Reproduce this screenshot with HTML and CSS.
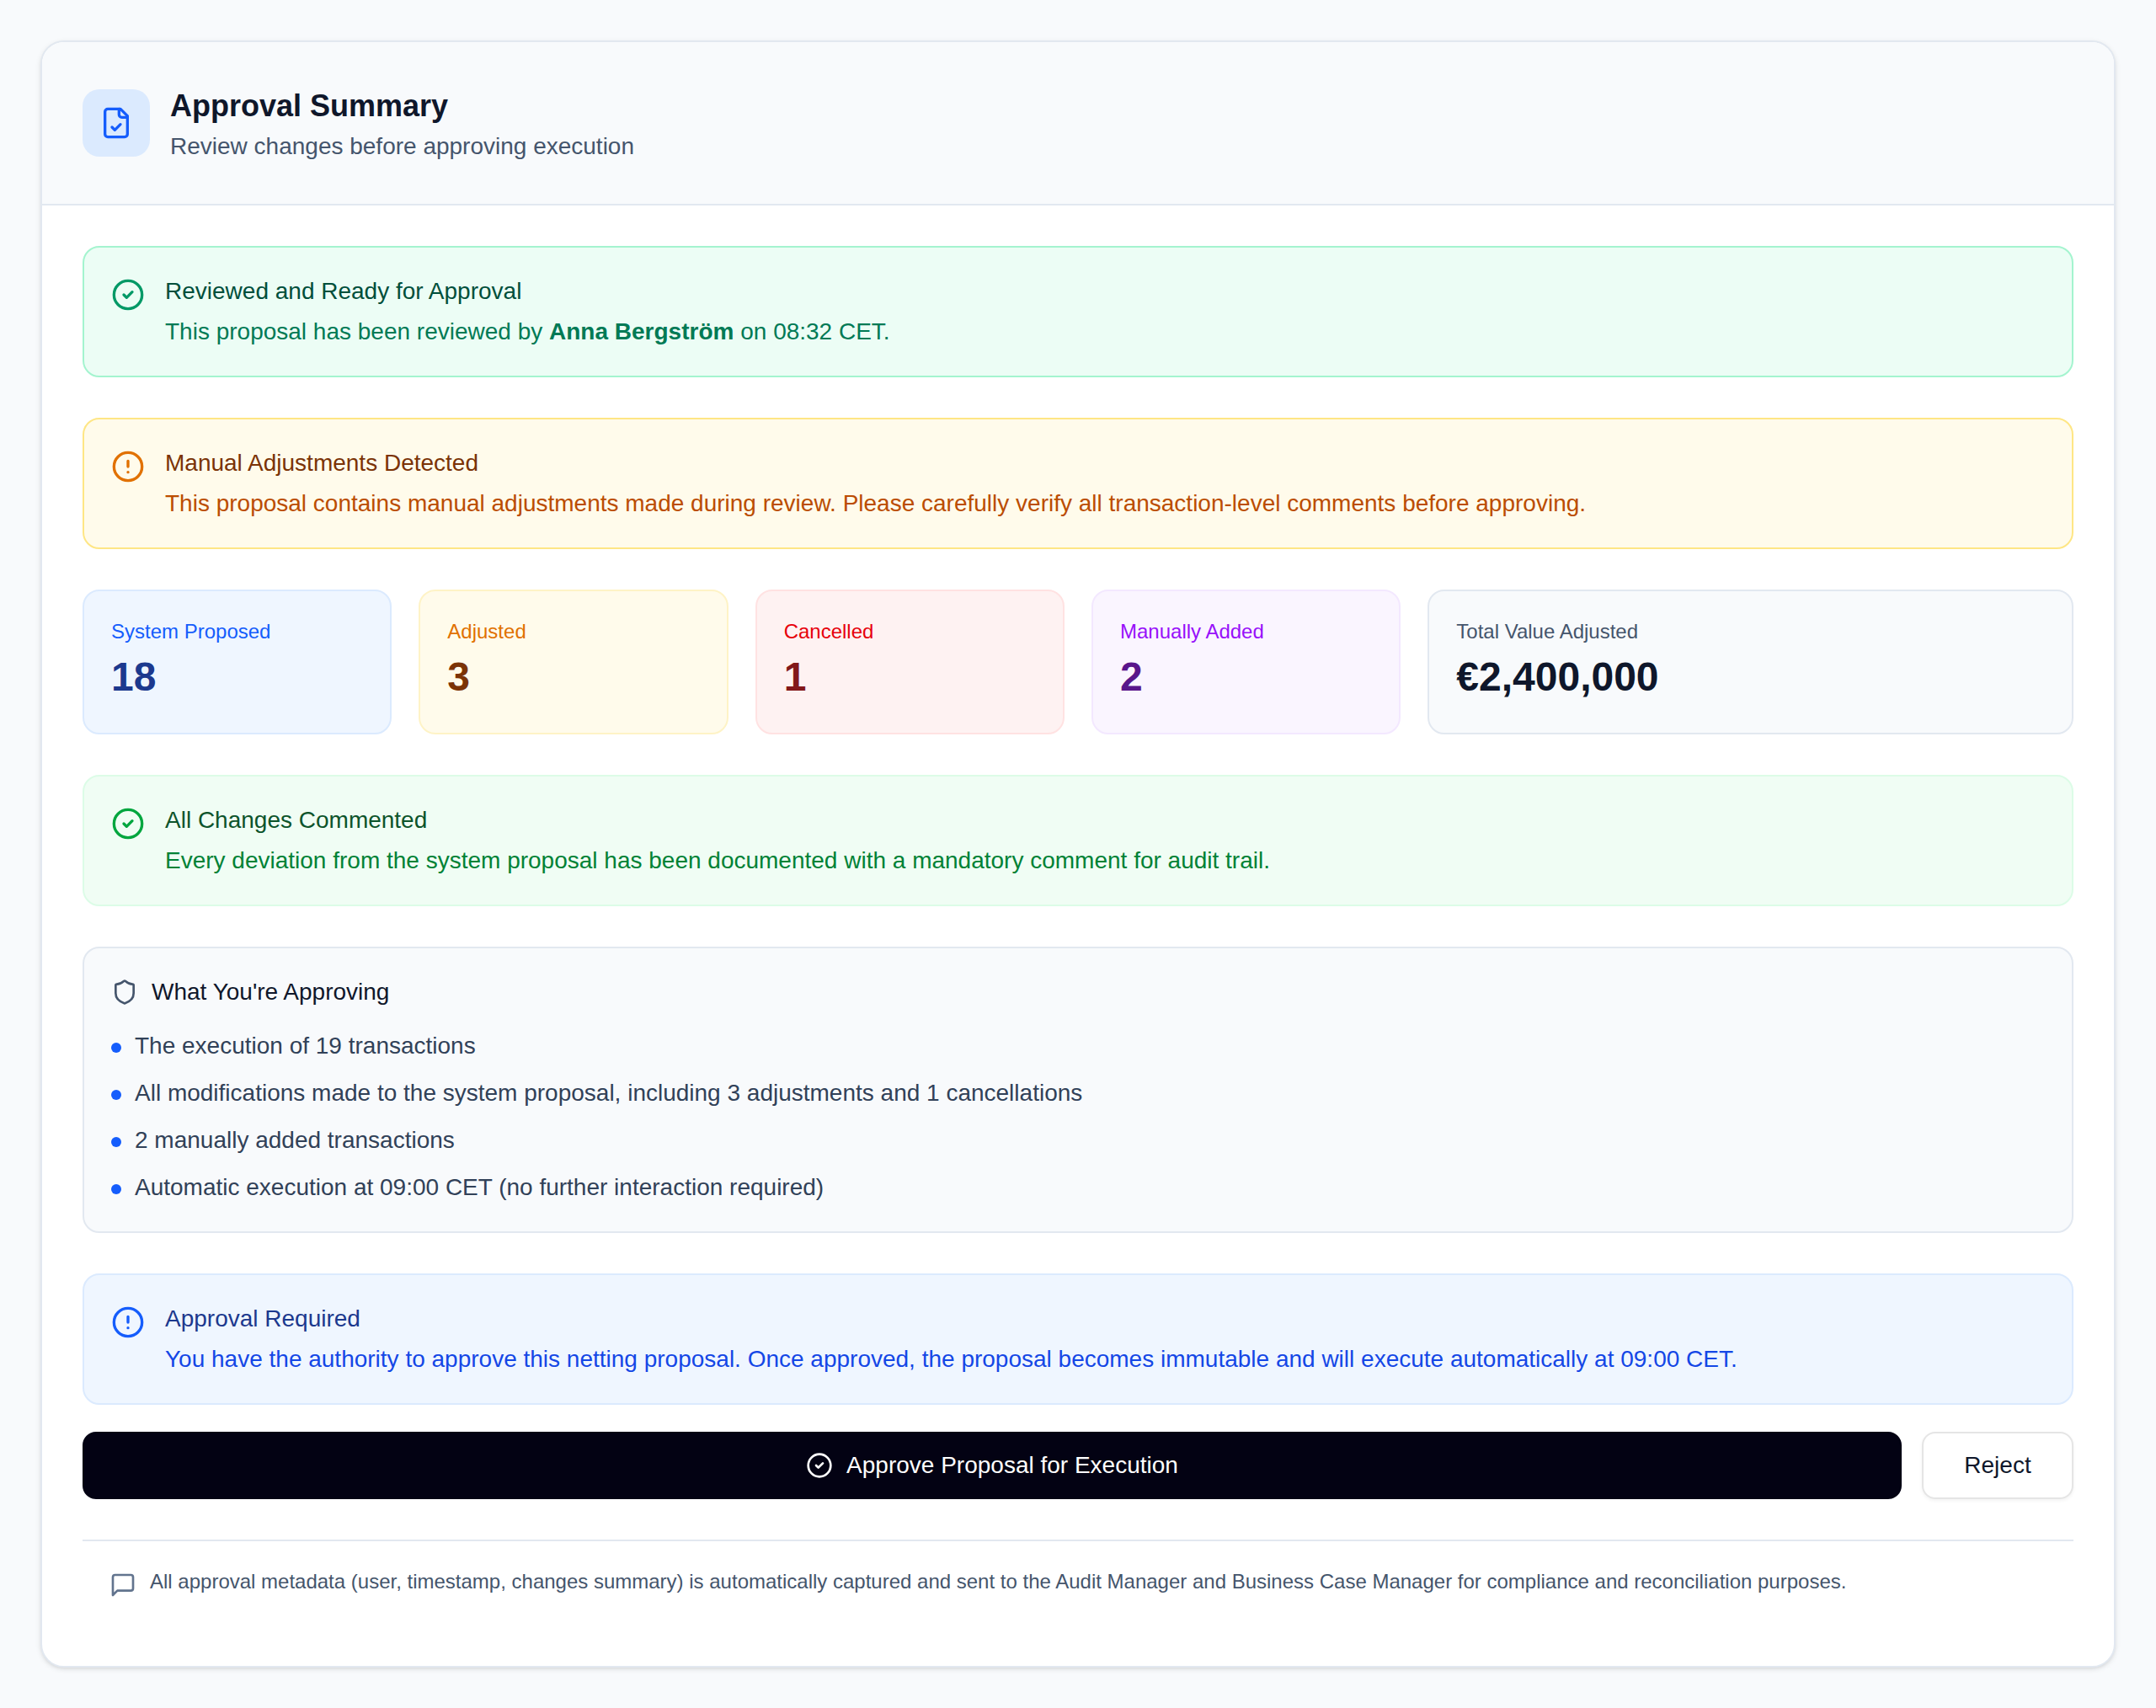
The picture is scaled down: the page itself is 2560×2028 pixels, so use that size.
FILE: index.html
```html
<!DOCTYPE html>
<html lang="en">
<head>
  <meta charset="UTF-8" />
  <meta name="viewport" content="width=device-width, initial-scale=1.0" />
  <title>Approval Summary</title>
  <link rel="stylesheet" href="styles.css">
</head>
<body>
  <!-- shared icons -->
  <svg class="sprite" aria-hidden="true">
    <symbol id="icon-check" viewBox="0 0 24 24">
      <circle cx="12" cy="12" r="10" />
      <path d="m9 12 2 2 4-4" />
    </symbol>
    <symbol id="icon-alert" viewBox="0 0 24 24">
      <circle cx="12" cy="12" r="10" />
      <path d="M12 8v4M12 16h.01" />
    </symbol>
  </svg>

  <main class="card">
    <header class="card-header">
      <div class="header-icon">
        <svg class="icon icon-lg" viewBox="0 0 24 24">
          <path d="M15 2H6a2 2 0 0 0-2 2v16a2 2 0 0 0 2 2h12a2 2 0 0 0 2-2V7Z" />
          <path d="M14 2v4a2 2 0 0 0 2 2h4" />
          <path d="m9 15 2 2 4-4" />
        </svg>
      </div>
      <div>
        <h1>Approval Summary</h1>
        <p class="subtitle">Review changes before approving execution</p>
      </div>
    </header>

    <div class="card-body">
      <section class="alert alert-reviewed">
        <svg class="icon icon-lg"><use href="#icon-check" /></svg>
        <div>
          <h2>Reviewed and Ready for Approval</h2>
          <p>This proposal has been reviewed by <strong>Anna Bergström</strong> on 08:32 CET.</p>
        </div>
      </section>

      <section class="alert alert-warning">
        <svg class="icon icon-lg"><use href="#icon-alert" /></svg>
        <div>
          <h2>Manual Adjustments Detected</h2>
          <p>This proposal contains manual adjustments made during review. Please carefully verify all transaction-level comments before approving.</p>
        </div>
      </section>

      <section class="stats">
        <div class="stat stat-blue">
          <p class="stat-label">System Proposed</p>
          <p class="stat-value">18</p>
        </div>
        <div class="stat stat-amber">
          <p class="stat-label">Adjusted</p>
          <p class="stat-value">3</p>
        </div>
        <div class="stat stat-red">
          <p class="stat-label">Cancelled</p>
          <p class="stat-value">1</p>
        </div>
        <div class="stat stat-purple">
          <p class="stat-label">Manually Added</p>
          <p class="stat-value">2</p>
        </div>
        <div class="stat stat-total">
          <p class="stat-label">Total Value Adjusted</p>
          <p class="stat-value">€2,400,000</p>
        </div>
      </section>

      <section class="alert alert-success">
        <svg class="icon icon-lg"><use href="#icon-check" /></svg>
        <div>
          <h2>All Changes Commented</h2>
          <p>Every deviation from the system proposal has been documented with a mandatory comment for audit trail.</p>
        </div>
      </section>

      <section class="approving">
        <h2>
          <svg class="icon" viewBox="0 0 24 24">
            <path d="M20 13c0 5-3.5 7.5-7.66 8.95a1 1 0 0 1-.67-.01C7.5 20.5 4 18 4 13V6a1 1 0 0 1 1-1c2 0 4.5-1.2 6.24-2.72a1.17 1.17 0 0 1 1.52 0C14.51 3.81 17 5 19 5a1 1 0 0 1 1 1z" />
          </svg>
          What You're Approving
        </h2>
        <ul>
          <li>The execution of 19 transactions</li>
          <li>All modifications made to the system proposal, including 3 adjustments and 1 cancellations</li>
          <li>2 manually added transactions</li>
          <li>Automatic execution at 09:00 CET (no further interaction required)</li>
        </ul>
      </section>

      <div class="decision">
        <section class="alert alert-info">
          <svg class="icon icon-lg"><use href="#icon-alert" /></svg>
          <div>
            <h2>Approval Required</h2>
            <p>You have the authority to approve this netting proposal. Once approved, the proposal becomes immutable and will execute automatically at 09:00 CET.</p>
          </div>
        </section>

        <div class="actions">
          <button type="button" class="btn btn-primary">
            <svg class="icon"><use href="#icon-check" /></svg>
            Approve Proposal for Execution
          </button>
          <button type="button" class="btn btn-outline">Reject</button>
        </div>
      </div>

      <footer class="audit-note">
        <svg class="icon" viewBox="0 0 24 24">
          <path d="M21 15a2 2 0 0 1-2 2H7l-4 4V5a2 2 0 0 1 2-2h14a2 2 0 0 1 2 2z" />
        </svg>
        <p>All approval metadata (user, timestamp, changes summary) is automatically captured and sent to the Audit Manager and Business Case Manager for compliance and reconciliation purposes.</p>
      </footer>
    </div>
  </main>
</body>
</html>
```
FILE: styles.css
```css
* {
  margin: 0;
  padding: 0;
  box-sizing: border-box;
}

body {
  padding: 48px;
  background: #f8fafc;
  color: #0f172b;
  font-family: "Liberation Sans", Arial, sans-serif;
  font-size: 28px;
  line-height: 40px;
}

h2 {
  font-size: 28px;
  font-weight: 400;
}

.sprite {
  display: none;
}

.icon {
  width: 32px;
  height: 32px;
  flex-shrink: 0;
  fill: none;
  stroke: currentColor;
  stroke-width: 2;
  stroke-linecap: round;
  stroke-linejoin: round;
}

.icon-lg {
  width: 40px;
  height: 40px;
}

/* Card */
.card {
  background: #fff;
  border: 2px solid #e2e8f0;
  border-radius: 28px;
  overflow: hidden;
  box-shadow: 0 2px 6px rgba(0, 0, 0, 0.1), 0 2px 4px -2px rgba(0, 0, 0, 0.1);
}

.card-header {
  display: flex;
  align-items: center;
  gap: 24px;
  padding: 48px;
  background: #f8fafc;
  border-bottom: 2px solid #e2e8f0;
}

.header-icon {
  display: flex;
  padding: 20px;
  border-radius: 20px;
  background: #dbeafe;
  color: #155dfc;
}

.card-header h1 {
  font-size: 36px;
  line-height: 56px;
}

.subtitle {
  color: #45556c;
}

.card-body {
  display: flex;
  flex-direction: column;
  gap: 48px;
  padding: 48px;
}

/* Alerts */
.alert {
  display: flex;
  align-items: flex-start;
  gap: 24px;
  padding: 32px;
  border: 2px solid;
  border-radius: 20px;
}

.alert .icon {
  margin-top: 4px;
}

.alert h2 {
  margin-bottom: 8px;
}

.alert-reviewed {
  background: #ecfdf5;
  border-color: #a4f4cf;
  color: #007a55;
}

.alert-reviewed .icon {
  color: #009966;
}

.alert-reviewed h2 {
  color: #004f3b;
}

.alert-warning {
  background: #fffbeb;
  border-color: #fee685;
  color: #bb4d00;
}

.alert-warning .icon {
  color: #e17100;
}

.alert-warning h2 {
  color: #7b3306;
}

.alert-success {
  background: #f0fdf4;
  border-color: #dcfce7;
  color: #008236;
}

.alert-success .icon {
  color: #00a63e;
}

.alert-success h2 {
  color: #0d542b;
}

.alert-info {
  background: #eff6ff;
  border-color: #dbeafe;
  color: #1447e6;
}

.alert-info .icon {
  color: #155dfc;
}

.alert-info h2 {
  color: #1c398e;
}

/* Stats */
.stats {
  display: grid;
  grid-template-columns: repeat(6, 1fr);
  gap: 32px;
}

.stat {
  padding: 32px;
  border: 2px solid;
  border-radius: 20px;
}

.stat-label {
  margin-bottom: 4px;
  font-size: 24px;
  line-height: 32px;
}

.stat-value {
  font-size: 48px;
  font-weight: 700;
  line-height: 68px;
}

.stat-blue {
  background: #eff6ff;
  border-color: #dbeafe;
  color: #155dfc;
}

.stat-blue .stat-value {
  color: #1c398e;
}

.stat-amber {
  background: #fffbeb;
  border-color: #fef3c6;
  color: #e17100;
}

.stat-amber .stat-value {
  color: #7b3306;
}

.stat-red {
  background: #fef2f2;
  border-color: #ffe2e2;
  color: #e7000b;
}

.stat-red .stat-value {
  color: #82181a;
}

.stat-purple {
  background: #faf5ff;
  border-color: #f3e8ff;
  color: #9810fa;
}

.stat-purple .stat-value {
  color: #59168b;
}

.stat-total {
  grid-column: span 2;
  background: #f8fafc;
  border-color: #e2e8f0;
  color: #45556c;
}

.stat-total .stat-value {
  color: #0f172b;
}

/* What you're approving */
.approving {
  padding: 32px;
  background: #f8fafc;
  border: 2px solid #e2e8f0;
  border-radius: 20px;
}

.approving h2 {
  display: flex;
  align-items: center;
  gap: 16px;
  margin-bottom: 24px;
}

.approving .icon {
  color: #45556c;
}

.approving ul {
  display: flex;
  flex-direction: column;
  gap: 16px;
  list-style: none;
}

.approving li {
  display: flex;
  gap: 16px;
  color: #314158;
}

.approving li::before {
  content: "";
  width: 12px;
  height: 12px;
  margin-top: 16px;
  flex-shrink: 0;
  border-radius: 50%;
  background: #155dfc;
}

/* Actions */
.decision {
  display: flex;
  flex-direction: column;
  gap: 32px;
}

.actions {
  display: flex;
  gap: 24px;
}

.btn {
  display: flex;
  align-items: center;
  justify-content: center;
  gap: 16px;
  min-width: 180px;
  height: 80px;
  padding: 0 48px;
  border: 2px solid transparent;
  border-radius: 16px;
  font: inherit;
  cursor: pointer;
}

.btn-primary {
  flex: 1;
  background: #030213;
  border-color: #030213;
  color: #fff;
}

.btn-outline {
  background: #fff;
  border-color: #e5e5e5;
  color: #0f172b;
  box-shadow: 0 2px 4px rgba(0, 0, 0, 0.05);
}

.audit-note {
  display: flex;
  align-items: flex-start;
  gap: 16px;
  padding: 32px;
  border-top: 2px solid #e2e8f0;
  color: #45556c;
  font-size: 24px;
  line-height: 32px;
}

.audit-note .icon {
  margin-top: 4px;
  color: #62748e;
}
```
